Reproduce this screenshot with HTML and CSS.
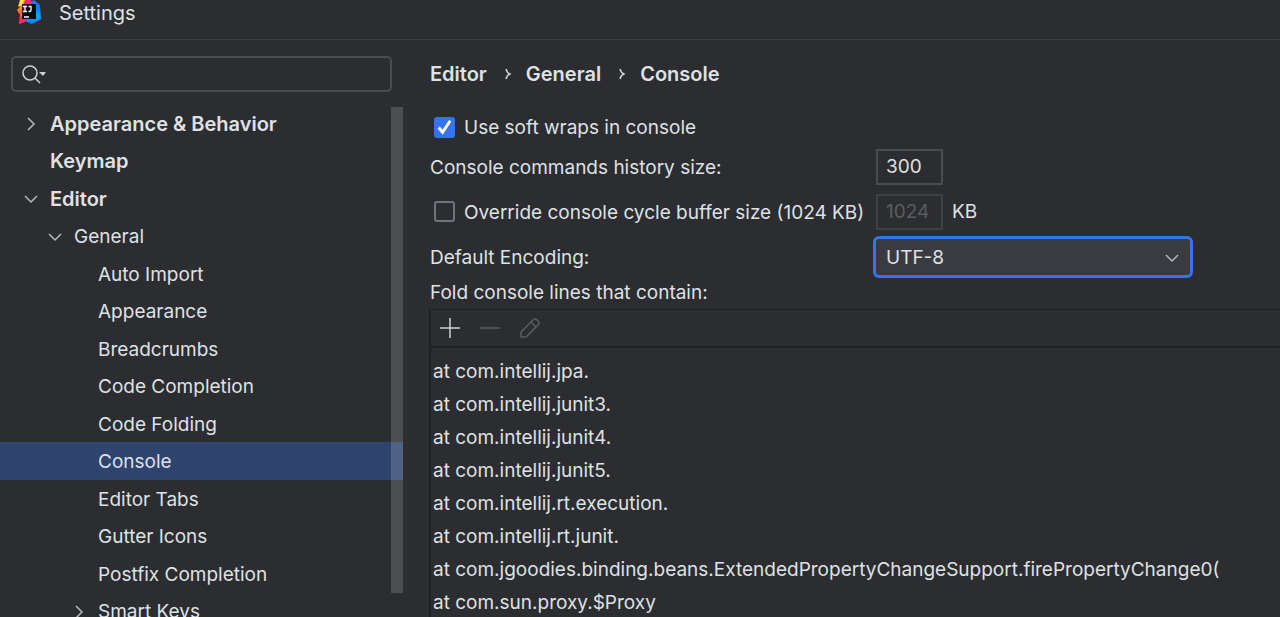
FILE: index.html
```html
<!DOCTYPE html>
<html lang="en">
<head>
<meta charset="utf-8">
<title>Settings</title>
<link rel="stylesheet" href="styles.css">
</head>
<body>
<svg class="defs" aria-hidden="true">
  <symbol id="chevron-right" viewBox="0 0 14 14"><path d="M4 1l6 6-6 6"/></symbol>
  <symbol id="chevron-down" viewBox="0 0 14 14"><path d="M1 4l6 6 6-6"/></symbol>
</svg>
<header class="titlebar">
  <svg class="logo" viewBox="0 0 24 25" aria-hidden="true">
    <defs>
      <linearGradient id="warm" x1="0" y1="0" x2="0" y2="1"><stop offset="0" stop-color="#ffb52e"/><stop offset=".5" stop-color="#fd6a3d"/><stop offset="1" stop-color="#fe2857"/></linearGradient>
      <linearGradient id="cool" x1="0" y1="0" x2="0" y2="1"><stop offset="0" stop-color="#2f6dff"/><stop offset=".35" stop-color="#087cfa"/><stop offset=".65" stop-color="#08a8fb"/><stop offset="1" stop-color="#087cfa"/></linearGradient>
    </defs>
    <path fill="url(#cool)" d="M13 2l4-2 6 5 1 14-9 5-5-2-6-3z"/>
    <path fill="url(#warm)" d="M3 0h6l5 5-5 15-7 4 1-9-3-5 3-3z"/>
    <path fill="#fe2870" d="M8 0h6l2 5H6zM3 18h8l-3 4-6 2z"/>
    <path fill="#ffe03a" d="M3 0h4L5 5 1 7z"/>
    <path fill="#08090c" d="M5 4h14v15H5z"/>
    <path fill="#3b1230" d="M5 4h5L5 15z"/>
    <path fill="none" stroke="#fff" stroke-width="1.3" d="M6 6.500h4M8 6.500v5M6 11.500h4M11.500 6.500h2.500v4l-1 1h-1.500M7 17h5"/>
  </svg>
  <h1 class="title">Settings</h1>
</header>
<div class="layout">
  <aside class="sidebar">
    <div class="search">
      <svg class="search-icon" viewBox="0 0 24 20" aria-hidden="true"><circle cx="8" cy="9" r="7"/><path d="M13 14l5 5"/><path class="solid" d="M17 8h7l-3 4z"/></svg>
      <input class="search-input" type="text" aria-label="Search settings">
    </div>
    <ul class="tree">
      <li class="row top"><svg class="chevron"><use href="#chevron-right"/></svg>Appearance &amp; Behavior</li>
      <li class="row top"><span class="chevron"></span>Keymap</li>
      <li class="row top"><svg class="chevron"><use href="#chevron-down"/></svg>Editor</li>
      <li class="row second"><svg class="chevron"><use href="#chevron-down"/></svg>General</li>
      <li class="row third"><span class="chevron"></span>Auto Import</li>
      <li class="row third"><span class="chevron"></span>Appearance</li>
      <li class="row third"><span class="chevron"></span>Breadcrumbs</li>
      <li class="row third"><span class="chevron"></span>Code Completion</li>
      <li class="row third"><span class="chevron"></span>Code Folding</li>
      <li class="row third selected"><span class="chevron"></span>Console</li>
      <li class="row third"><span class="chevron"></span>Editor Tabs</li>
      <li class="row third"><span class="chevron"></span>Gutter Icons</li>
      <li class="row third"><span class="chevron"></span>Postfix Completion</li>
      <li class="row third"><svg class="chevron"><use href="#chevron-right"/></svg>Smart Keys</li>
    </ul>
    <div class="scrollbar"></div>
  </aside>
  <main class="content">
    <nav class="crumbs" aria-label="Breadcrumb">
      <span>Editor</span><svg class="crumb-sep" viewBox="0 0 6 12"><path d="M1 1q1 4 4 5-3 1-4 5"/></svg><span>General</span><svg class="crumb-sep" viewBox="0 0 6 12"><path d="M1 1q1 4 4 5-3 1-4 5"/></svg><span>Console</span>
    </nav>
    <form class="form">
      <label class="check-row"><span class="check"><input type="checkbox" checked><svg class="tick" viewBox="0 0 22 22"><path d="M5 11l4 5 8-12"/></svg></span><span class="caption">Use soft wraps in console</span></label>
      <div class="field">
        <label class="name caption" for="history">Console commands history size:</label>
        <input class="number" id="history" type="text" value="300">
      </div>
      <div class="field">
        <label class="check-row name"><span class="check"><input type="checkbox"></span><span class="caption">Override console cycle buffer size (1024 KB)</span></label>
        <input class="number" type="text" value="1024" aria-label="Buffer size" disabled>
        <span class="unit">KB</span>
      </div>
      <div class="field">
        <label class="name caption" for="encoding">Default Encoding:</label>
        <span class="combo"><select id="encoding"><option>UTF-8</option></select><svg class="chevron combo-arrow"><use href="#chevron-down"/></svg></span>
      </div>
    </form>
    <h2 class="list-title">Fold console lines that contain:</h2>
    <section class="panel">
      <div class="toolbar">
        <button type="button" aria-label="Add"><svg viewBox="0 0 20 20"><path d="M10 0v20M0 10h20"/></svg></button>
        <button type="button" aria-label="Remove" disabled><svg viewBox="0 0 20 20"><path d="M0 10h20"/></svg></button>
        <button type="button" aria-label="Edit" disabled><svg viewBox="0 0 20 20"><path d="M1 19v-5L13 2q2-2 4 0l1 1q2 2 0 4L6 19zM11 4l5 5"/></svg></button>
      </div>
      <ul class="lines">
        <li>at com.intellij.jpa.</li>
        <li>at com.intellij.junit3.</li>
        <li>at com.intellij.junit4.</li>
        <li>at com.intellij.junit5.</li>
        <li>at com.intellij.rt.execution.</li>
        <li>at com.intellij.rt.junit.</li>
        <li>at com.jgoodies.binding.beans.ExtendedPropertyChangeSupport.firePropertyChange0(</li>
        <li>at com.sun.proxy.$Proxy</li>
      </ul>
    </section>
  </main>
</div>
</body>
</html>
```
FILE: styles.css
```css
* { box-sizing: border-box; }
body {
  margin: 0;
  height: 100vh;
  overflow: hidden;
  display: flex;
  flex-direction: column;
  background: #2b2d30;
  color: #dfe1e5;
  font: 19px/24px Inter, "Liberation Sans", sans-serif;
}
input, select, button { font: inherit; color: inherit; margin: 0; }
ul { list-style: none; margin: 0; padding: 0; }
svg { fill: none; stroke: #ced0d6; stroke-width: 1.5; flex: none; }
.defs { position: absolute; width: 0; height: 0; }
.titlebar {
  display: flex;
  gap: 18px;
  height: 40px;
  padding-left: 17px;
  border-bottom: 1px solid #3c3e42;
  flex: none;
}
.logo { width: 24px; height: 25px; stroke: none; }
.title { margin: 0; padding-top: 1px; font-size: 20px; font-weight: 400; }
.layout { display: flex; flex: 1; min-height: 0; }

.sidebar { position: relative; width: 403px; flex: none; padding-top: 16px; }
.search {
  display: flex;
  align-items: center;
  height: 36px;
  margin: 0 11px 13px;
  padding-left: 9px;
  border: 2px solid #4a4c51;
  border-radius: 5px;
}
.search-icon { width: 24px; height: 20px; }
.solid { fill: #ced0d6; stroke: none; }
.search-input { flex: 1; min-width: 0; border: 0; outline: 0; background: none; }
.row { display: flex; align-items: center; gap: 12px; height: 37px; padding-top: 2px; }
.row:nth-child(even) { height: 38px; }
.top { padding-top: 0; padding-left: 24px; font-size: 20px; font-weight: 600; }
.second { padding-left: 48px; }
.third { padding-left: 72px; }
.selected { background: #2e436e; }
.chevron { width: 14px; height: 14px; flex: none; stroke: #b4b8bf; }
.scrollbar {
  position: absolute;
  top: 67px;
  right: 0;
  bottom: 24px;
  width: 12px;
  background: rgba(255, 255, 255, 0.16);
}

.content { flex: 1; min-width: 0; padding: 22px 0 0 27px; display: flex; flex-direction: column; }
.crumbs { display: flex; align-items: center; font-size: 20px; font-weight: 600; }
.crumb-sep { width: 6px; height: 12px; margin: 0 15px 0 18px; }
.form { display: flex; flex-direction: column; gap: 8px; padding-top: 28px; }
.check-row { display: flex; align-items: center; gap: 9px; padding-left: 4px; }
.check { position: relative; display: flex; }
.check input {
  appearance: none;
  width: 21px;
  height: 21px;
  border: 2px solid #6f737a;
  border-radius: 3px;
}
.check input:checked { background: #3574f0; border-color: #3574f0; }
.tick { position: absolute; inset: 0; stroke: #fff; stroke-width: 3; pointer-events: none; }
.caption { padding-top: 2px; }
.field { display: flex; align-items: center; height: 37px; }
.name { width: 446px; flex: none; white-space: nowrap; }
.number {
  width: 67px;
  height: 36px;
  padding: 0 8px;
  border: 2px solid #4a4c51;
  background: none;
}
.number:disabled { color: #5a5d63; border-color: #3f4145; }
.unit { margin-left: 9px; }
.combo { position: relative; display: flex; width: 314px; }
.combo select {
  appearance: none;
  flex: 1;
  height: 36px;
  padding: 2px 10px 0;
  border: 0;
  border-radius: 3px;
  background: #393b40;
  box-shadow: 0 0 0 3px #3574f0;
}
.combo-arrow { position: absolute; right: 11px; top: 12px; pointer-events: none; }
.list-title { margin: 0; padding: 6px 0 4px; font-size: 19px; font-weight: 400; }
.panel { flex: 1; min-height: 0; border: solid #1e1f22; border-width: 1px 0 0 2px; margin-left: -1px; }
.toolbar { display: flex; align-items: center; gap: 20px; height: 38px; padding-left: 9px; border-bottom: 2px solid #1e1f22; }
.toolbar button { display: flex; padding: 0; border: 0; background: none; }
.toolbar svg { width: 20px; height: 20px; }
.toolbar button:disabled svg { stroke: #5a5d63; }
.lines { padding: 7px 0 0 2px; white-space: nowrap; line-height: 33px; }
```
